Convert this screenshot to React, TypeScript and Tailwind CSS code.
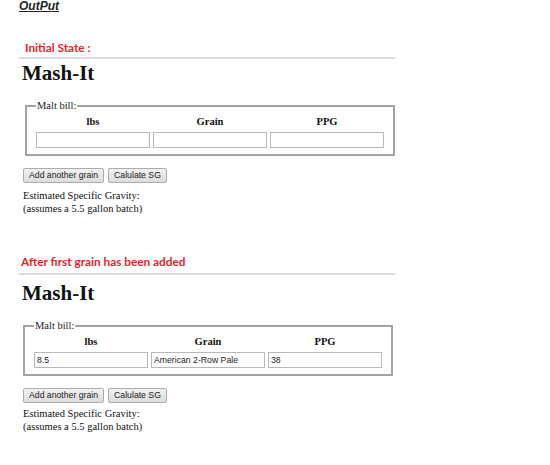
import React from "react";

type Row = { lbs: string; grain: string; ppg: string };

const serif = "font-['Liberation_Serif','Times_New_Roman',serif]";

function MashIt({
  label,
  rows,
  labelTop,
  hrGap,
  titleGap,
  boxClass,
  noteGap,
}: {
  label: string;
  rows: Row[];
  labelTop: string;
  hrGap: string;
  titleGap: string;
  boxClass: string;
  noteGap: string;
}) {
  return (
    <section>
      <p
        className={`${labelTop} text-[11.8px] leading-[13px] font-bold text-[#e3242b] font-['Lato','Open_Sans',sans-serif]`}
      >
        {label}
      </p>
      <div className={`${hrGap} w-[376px] border-t-2 border-[#dcdcdc]`} />
      <h1 className={`${titleGap} ml-[3px] text-[21px] leading-[24px] font-bold text-[#111] ${serif}`}>
        Mash-It
      </h1>

      <fieldset className={`${boxClass} w-[370px] border-2 border-[#a3a3a3] pl-[9px] pr-[9px] pb-[6px] ${serif}`}>
        <legend className="px-[1px] text-[10.5px] leading-[12px] text-[#222]">Malt bill:</legend>
        <div className="grid grid-cols-[114px_114px_114px] gap-x-[3px] pt-[3px]">
          {["lbs", "Grain", "PPG"].map((h) => (
            <div key={h} className="text-center text-[10.5px] leading-[14px] font-bold text-[#111]">
              {h}
            </div>
          ))}
          {rows.map((r, i) => (
            <React.Fragment key={i}>
              {[r.lbs, r.grain, r.ppg].map((v, j) => (
                <input
                  key={j}
                  readOnly
                  value={v}
                  className="mt-[3px] h-[16px] w-[114px] border border-[#b8b8b8] bg-white px-[2px] text-[8.7px] text-[#222] font-['Liberation_Sans',Arial,sans-serif] outline-none"
                />
              ))}
            </React.Fragment>
          ))}
        </div>
      </fieldset>

      <div className="mt-[12px] ml-[4px] flex gap-[4px] font-['Liberation_Sans',Arial,sans-serif]">
        <button className="h-[15px] px-[5px] rounded-[2px] border border-[#acacac] bg-gradient-to-b from-[#f2f2f2] to-[#dcdcdc] text-[8.7px] leading-[13px] text-[#222]">
          Add another grain
        </button>
        <button className="h-[15px] px-[5px] rounded-[2px] border border-[#acacac] bg-gradient-to-b from-[#f2f2f2] to-[#dcdcdc] text-[8.7px] leading-[13px] text-[#222]">
          Calulate SG
        </button>
      </div>

      <div className={`${noteGap} ml-[4px] text-[10.5px] leading-[13px] text-[#111] ${serif}`}>
        <p>Estimated Specific Gravity:</p>
        <p>(assumes a 5.5 gallon batch)</p>
      </div>
    </section>
  );
}

export default function App() {
  return (
    <div className="w-[550px] h-[465px] bg-white pl-[19px] overflow-hidden">
      <p className="text-[12px] leading-[12px] font-bold italic underline text-[#222] font-['Liberation_Sans',Arial,sans-serif]">
        OutPut
      </p>

      <MashIt
        label="Initial State :"
        rows={[{ lbs: "", grain: "", ppg: "" }]}
        labelTop="mt-[29px] ml-[6px]"
        hrGap="mt-[3px]"
        titleGap="mt-[2px]"
        boxClass="mt-[15px] ml-[6px]"
        noteGap="mt-[6px]"
      />

      <MashIt
        label="After first grain has been added"
        rows={[{ lbs: "8.5", grain: "American 2-Row Pale", ppg: "38" }]}
        labelTop="mt-[40px] ml-[2px]"
        hrGap="mt-[5px]"
        titleGap="mt-[6px]"
        boxClass="mt-[15px] ml-[4px]"
        noteGap="mt-[4px]"
      />
    </div>
  );
}
